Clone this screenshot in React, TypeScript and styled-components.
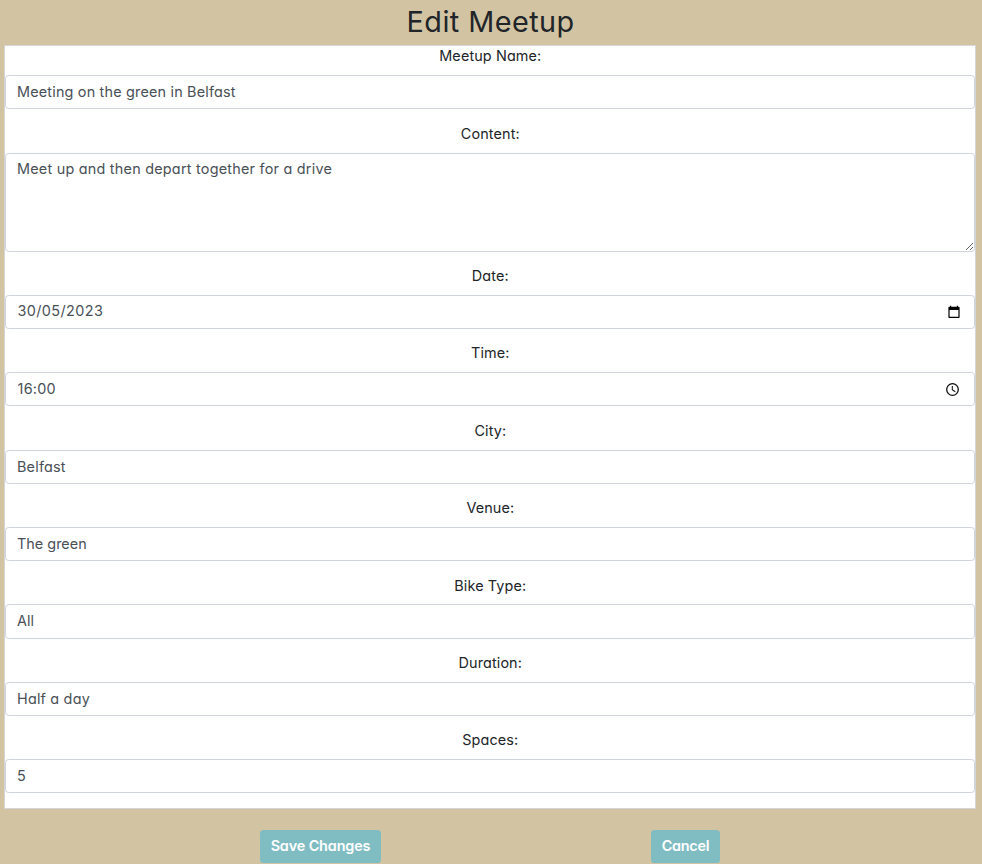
import React from "react";
import styled, { createGlobalStyle, css } from "styled-components";

const GlobalStyle = createGlobalStyle`
  *, *::before, *::after { box-sizing: border-box; }
  body {
    margin: 0;
    min-height: 100vh;
    overflow: hidden;
    background: #d2c4a3;
    color: #212529;
    font-family: Inter, "Open Sans", sans-serif;
    font-feature-settings: "cv11", "calt" 0;
    font-size: 14.4px;
    line-height: 21.6px;
  }
`;

const Page = styled.main`
  padding: 4.6px 6.4px 0 4px;
`;

const Title = styled.h2`
  margin: 0 0 6.15px;
  padding-left: 1.6px;
  text-align: center;
  font-size: 28.8px;
  font-weight: 400;
  line-height: 34.6px;
  letter-spacing: 0.45px;
`;

const Card = styled.div`
  padding-bottom: 0.4px;
  border: 1px solid #d5d5d8;
  background: #fff;
`;

const Label = styled.label`
  display: block;
  margin-bottom: 8.8px;
  padding-left: 1px;
  text-align: center;
  line-height: 20px;
  letter-spacing: 0.12px;
`;

const Group = styled.div`
  margin-bottom: 14.4px;

  &:first-child ${Label} {
    margin-bottom: 8.97px;
  }
`;

const control = css`
  display: block;
  width: 100%;
  margin: 0;
  padding: 4.6px 11px 5.8px;
  border: 1px solid #ced4da;
  border-radius: 3.6px;
  outline: 0;
  background: #fff;
  color: #495057;
  font: inherit;
  font-feature-settings: inherit;
`;

const Input = styled.input<{ $spacing: number; $indent?: number; $lift?: number }>`
  ${control}
  height: 34.1px;
  margin-bottom: 14.5px;
  padding-left: ${(p) => 11 + (p.$indent ?? 0)}px;
  padding-bottom: ${(p) => 5.8 + (p.$lift ?? 0)}px;
  letter-spacing: ${(p) => p.$spacing}px;
`;

const TextArea = styled.textarea<{ $spacing: number }>`
  ${control}
  height: 99px;
  resize: vertical;
  letter-spacing: ${(p) => p.$spacing}px;
`;

const Field = styled.div`
  position: relative;
`;

const PickerIcon = styled.svg<{ $top: number; $right: number }>`
  position: absolute;
  top: ${(p) => p.$top}px;
  right: ${(p) => p.$right}px;
  width: 15px;
  height: 15px;
`;

const Actions = styled.div`
  display: grid;
  grid-template-columns: 633px auto;
  margin-top: 21.2px;
`;

const ActionSlot = styled.div`
  display: flex;
  justify-content: center;
  &:last-child { justify-content: flex-start; padding-left: 14px; }
`;

const Button = styled.button<{ $width: number; $spacing: number }>`
  width: ${(p) => p.$width}px;
  height: 33px;
  padding: 0 0 1.4px;
  border: 0;
  border-radius: 3.6px;
  background: #80bdc3;
  color: #fff;
  font: inherit;
  font-feature-settings: inherit;
  font-weight: 600;
  white-space: nowrap;
  letter-spacing: ${(p) => p.$spacing}px;
`;

const CalendarIcon = () => (
  <PickerIcon $top={10} $right={13} viewBox="0 0 15 15" aria-hidden="true">
    <path
      d="M2.2 1.8h9.6q.8 0 .8.8v9.6q0 .8-.8.8H2.2q-.8 0-.8-.8V2.6q0-.8.8-.8z M2.6 5v6.8h8.8V5z"
      fill="#000"
      fillRule="evenodd"
    />
    <path d="M3.6 .8v1.6M10.4 .8v1.6" stroke="#000" strokeWidth="1.2" />
  </PickerIcon>
);

const ClockIcon = () => (
  <PickerIcon $top={9.8} $right={15} viewBox="0 0 15 15" aria-hidden="true">
    <circle cx="7.5" cy="7.5" r="5.8" fill="none" stroke="#111" strokeWidth="1.3" />
    <path d="M7.3 4v3.8l3 1.9" fill="none" stroke="#111" strokeWidth="1.05" />
  </PickerIcon>
);

type Entry = {
  label: string;
  value: string;
  spacing: number;
  indent?: number;
  lift?: number;
  kind?: "area" | "date" | "time";
};

const entries: Entry[] = [
  { label: "Meetup Name:", value: "Meeting on the green in Belfast", spacing: 0.19 },
  { label: "Content:", value: "Meet up and then depart together for a drive", spacing: 0.23, kind: "area" },
  { label: "Date:", value: "30/05/2023", spacing: 0.4, indent: 0.5, lift: 1.2, kind: "date" },
  { label: "Time:", value: "16:00", spacing: 0.25, indent: 0.6, kind: "time" },
  { label: "City:", value: "Belfast", spacing: 0.2 },
  { label: "Venue:", value: "The green", spacing: 0.02 },
  { label: "Bike Type:", value: "All", spacing: 0.1 },
  { label: "Duration:", value: "Half a day", spacing: 0.2 },
  { label: "Spaces:", value: "5", spacing: 0 },
];

export default function App() {
  return (
    <>
      <GlobalStyle />
      <Page>
        <Title>Edit Meetup</Title>
        <form onSubmit={(e) => e.preventDefault()}>
          <Card>
            {entries.map((e, i) => (
              <Group key={e.label}>
                <Label htmlFor={`field-${i}`}>{e.label}</Label>
                <Field>
                  {e.kind === "area" ? (
                    <TextArea id={`field-${i}`} defaultValue={e.value} $spacing={e.spacing} spellCheck={false} />
                  ) : (
                    <Input
                      id={`field-${i}`}
                      defaultValue={e.value}
                      $spacing={e.spacing}
                      $indent={e.indent}
                      $lift={e.lift}
                    />
                  )}
                  {e.kind === "date" && <CalendarIcon />}
                  {e.kind === "time" && <ClockIcon />}
                </Field>
              </Group>
            ))}
          </Card>
          <Actions>
            <ActionSlot>
              <Button type="submit" $width={121} $spacing={-0.13}>Save Changes</Button>
            </ActionSlot>
            <ActionSlot>
              <Button type="button" $width={69} $spacing={-0.25}>Cancel</Button>
            </ActionSlot>
          </Actions>
        </form>
      </Page>
    </>
  );
}
